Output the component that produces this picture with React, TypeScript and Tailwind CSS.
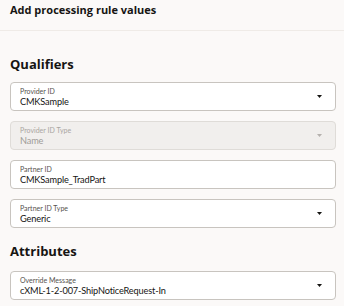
const Field = ({ label, value, disabled, select = true }: { label: string; value: string; disabled?: boolean; select?: boolean }) => (
  <div
    className={`flex items-center h-[29px] rounded-[4px] border pl-[9px] pr-[13px] ${
      disabled ? 'bg-[#f1efed] border-[#dfdcd8]' : 'bg-white border-[#c8c4bf]'
    }`}
  >
    <div className="flex-1 flex flex-col leading-none pt-[1px]">
      <span className={`text-[7px] leading-[9px] ${disabled ? 'text-[#a9a5a1]' : 'text-[#56524e]'}`}>{label}</span>
      <span className={`text-[9.2px] leading-[12px] tracking-[-0.15px] ${disabled ? 'text-[#a09c98]' : 'text-[#161513]'}`}>{value}</span>
    </div>
    {select && (
      <svg width="5" height="3" viewBox="0 0 5 3" className={disabled ? 'text-[#b5b1ad]' : 'text-[#161513]'}>
        <path d="M0 0h5L2.5 3z" fill="currentColor" />
      </svg>
    )}
  </div>
);

export default function App() {
  return (
    <div className="w-[344px] h-[306px] bg-[#fbf9f8] font-['Lato','Open_Sans',sans-serif] overflow-hidden">
      <div className="h-[31px] border-b border-[#efebe7] px-[10px] pt-[2px]">
        <h1 className="font-['Open_Sans',sans-serif] font-bold text-[11px] leading-[16px] text-[#161513]">Add processing rule values</h1>
      </div>
      <div className="px-[10px] pr-[8px]">
        <h2 className="font-['Open_Sans',sans-serif] font-bold text-[13px] leading-[18px] text-[#161513] mt-[24px] mb-[9px]">Qualifiers</h2>
        <div className="flex flex-col gap-[10px]">
          <Field label="Provider ID" value="CMKSample" />
          <Field label="Provider ID Type" value="Name" disabled />
          <Field label="Partner ID" value="CMKSample_TradPart" select={false} />
          <Field label="Partner ID Type" value="Generic" />
        </div>
        <h2 className="font-['Open_Sans',sans-serif] font-bold text-[13px] leading-[18px] text-[#161513] mt-[14px] mb-[11px]">Attributes</h2>
        <Field label="Override Message" value="cXML-1-2-007-ShipNoticeRequest-In" />
      </div>
    </div>
  );
}
